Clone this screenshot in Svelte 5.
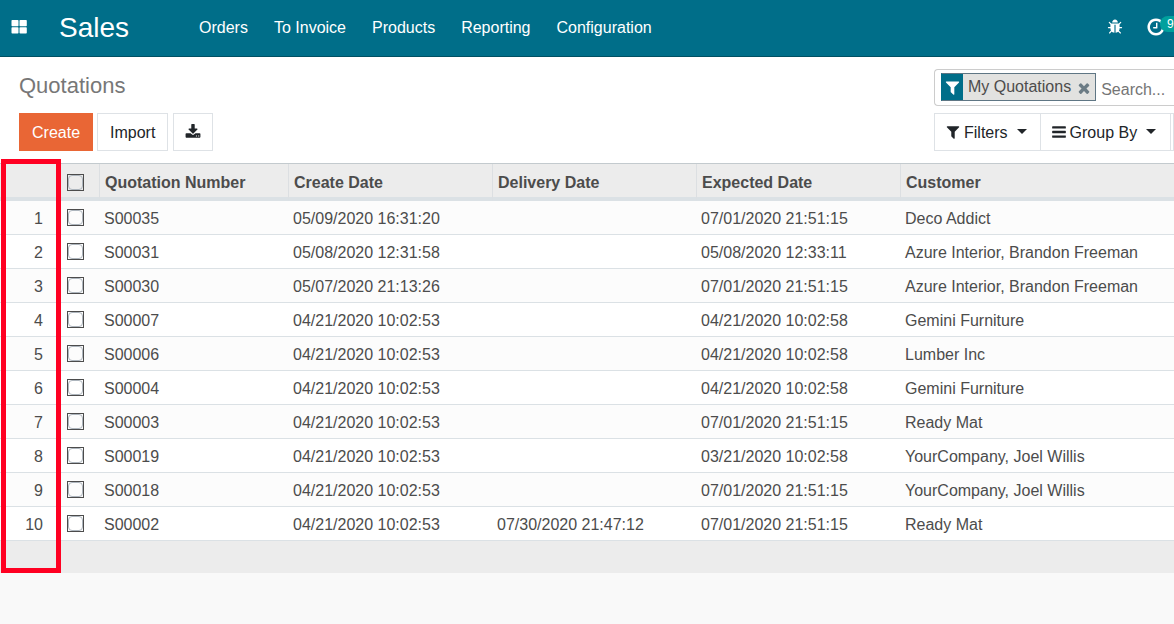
<script>
  const menu = ['Orders', 'To Invoice', 'Products', 'Reporting', 'Configuration'];
  const columns = ['Quotation Number', 'Create Date', 'Delivery Date', 'Expected Date', 'Customer'];
  const rows = [
    ['S00035', '05/09/2020 16:31:20', '', '07/01/2020 21:51:15', 'Deco Addict'],
    ['S00031', '05/08/2020 12:31:58', '', '05/08/2020 12:33:11', 'Azure Interior, Brandon Freeman'],
    ['S00030', '05/07/2020 21:13:26', '', '07/01/2020 21:51:15', 'Azure Interior, Brandon Freeman'],
    ['S00007', '04/21/2020 10:02:53', '', '04/21/2020 10:02:58', 'Gemini Furniture'],
    ['S00006', '04/21/2020 10:02:53', '', '04/21/2020 10:02:58', 'Lumber Inc'],
    ['S00004', '04/21/2020 10:02:53', '', '04/21/2020 10:02:58', 'Gemini Furniture'],
    ['S00003', '04/21/2020 10:02:53', '', '07/01/2020 21:51:15', 'Ready Mat'],
    ['S00019', '04/21/2020 10:02:53', '', '03/21/2020 10:02:58', 'YourCompany, Joel Willis'],
    ['S00018', '04/21/2020 10:02:53', '', '07/01/2020 21:51:15', 'YourCompany, Joel Willis'],
    ['S00002', '04/21/2020 10:02:53', '07/30/2020 21:47:12', '07/01/2020 21:51:15', 'Ready Mat']
  ];
  const icons = {
    filter: 'M1595 295q17 41-14 70l-493 493v742q0 42-39 59-13 5-25 5-27 0-45-19l-256-256q-19-19-19-45v-486l-493-493q-31-29-14-70 17-39 59-39h1280q42 0 59 39z',
    download: 'M1344 1344q0-26-19-45t-45-19-45 19-19 45 19 45 45 19 45-19 19-45zm256 0q0-26-19-45t-45-19-45 19-19 45 19 45 45 19 45-19 19-45zm128-224v320q0 40-28 68t-68 28h-1472q-40 0-68-28t-28-68v-320q0-40 28-68t68-28h465l135 136q58 56 136 56t136-56l136-136h464q40 0 68 28t28 68zm-325-569q17 41-14 70l-448 448q-18 19-45 19t-45-19l-448-448q-31-29-14-70 17-39 59-39h256v-448q0-26 19-45t45-19h256q26 0 45 19t19 45v448h256q42 0 59 39z',
    times: 'M1490 1322q0 40-28 68l-136 136q-28 28-68 28t-68-28l-294-294-294 294q-28 28-68 28t-68-28l-136-136q-28-28-28-68t28-68l294-294-294-294q-28-28-28-68t28-68l136-136q28-28 68-28t68 28l294 294 294-294q28-28 68-28t68 28l136 136q28 28 28 68t-28 68l-294 294 294 294q28 28 28 68z',
    clock: 'M1024 544v448q0 14-9 23t-23 9h-320q-14 0-23-9t-9-23v-64q0-14 9-23t23-9h224v-352q0-14 9-23t23-9h64q14 0 23 9t9 23zm416 352q0-148-73-273t-198-198-273-73-273 73-198 198-73 273 73 273 198 198 273 73 273-73 198-198 73-273zm224 0q0 209-103 385.5t-279.5 279.5-385.5 103-385.5-103-279.5-279.5-103-385.5 103-385.5 279.5-279.5 385.5-103 385.5 103 279.5 279.5 103 385.5z',
    bug: 'M1696 960q0 26-19 45t-45 19h-224q0 171-67 290l208 209q19 19 19 45t-19 45q-18 19-45 19t-45-19l-198-197q-5 5-15 13t-42 28.5-65 36.5-82 29-97 13v-896h-128v896q-51 0-101.5-13.5t-87-33-66-39-43.5-32.5l-15-14-183 207q-20 21-48 21-24 0-43-16-19-18-20.5-44.5t15.5-46.5l202-227q-58-114-58-274h-224q-26 0-45-19t-19-45 19-45 45-19h224v-294l-173-173q-19-19-19-45t19-45 45-19 45 19l173 173h844l173-173q19-19 45-19t45 19 19 45-19 45l-173 173v294h224q26 0 45 19t19 45zm-480-576h-640q0-133 93.5-226.500t226.500-93.500 226.500 93.500 93.500 226.500z',
    bars: 'M1664 1344v128q0 26-19 45t-45 19h-1408q-26 0-45-19t-19-45v-128q0-26 19-45t45-19h1408q26 0 45 19t19 45zm0-512v128q0 26-19 45t-45 19h-1408q-26 0-45-19t-19-45v-128q0-26 19-45t45-19h1408q26 0 45 19t19 45zm0-512v128q0 26-19 45t-45 19h-1408q-26 0-45-19t-19-45v-128q0-26 19-45t45-19h1408q26 0 45 19t19 45z'
  };
</script>

{#snippet icon(name, size)}
  <svg width={size} height={size} viewBox="0 0 1792 1792" fill="currentColor" aria-hidden="true"><path d={icons[name]} /></svg>
{/snippet}

<header class="navbar">
  <button class="apps" aria-label="Applications">
    <svg width="16" height="14" viewBox="0 0 16 14" fill="currentColor" aria-hidden="true">
      <rect x="0.500" y="0" width="7" height="6.300" rx="0.800" />
      <rect x="8.500" y="0" width="7.300" height="6.300" rx="0.800" />
      <rect x="0.500" y="7.300" width="7" height="6.300" rx="0.800" />
      <rect x="8.500" y="7.300" width="7.300" height="6.300" rx="0.800" />
    </svg>
  </button>
  <a class="brand" href="#sales">Sales</a>
  <nav>
    {#each menu as item}<a href="#menu">{item}</a>{/each}
  </nav>
  <div class="systray">
    <button aria-label="Debug">{@render icon('bug', 16)}</button>
    <button class="activities" aria-label="Activities">{@render icon('clock', 20)}<span class="badge">9</span></button>
  </div>
</header>

<section class="panel">
  <div class="left">
    <h1>Quotations</h1>
    <div class="actions">
      <button class="btn primary">Create</button>
      <button class="btn">Import</button>
      <button class="btn export" aria-label="Export">{@render icon('download', 16)}</button>
    </div>
  </div>
  <div class="right">
    <div class="search">
      <div class="facet">
        <span class="facet-icon">{@render icon('filter', 17)}</span>
        <span class="facet-name">My Quotations</span>
        <button class="remove" aria-label="Remove filter">{@render icon('times', 16)}</button>
      </div>
      <input type="text" placeholder="Search..." aria-label="Search" />
    </div>
    <div class="options">
      <button class="btn filters">{@render icon('filter', 16)}<span>Filters</span><i class="caret"></i></button>
      <button class="btn group">{@render icon('bars', 16)}<span>Group By</span><i class="caret"></i></button>
      <span class="next"></span>
    </div>
  </div>
</section>

<main class="list">
  <table>
    <colgroup>
      <col class="c-num" /><col class="c-check" /><col class="c-name" /><col class="c-date" /><col class="c-date" /><col class="c-date" /><col />
    </colgroup>
    <thead>
      <tr>
        <th></th>
        <th class="check"><input type="checkbox" aria-label="Select all" /></th>
        {#each columns as column}<th class="field" scope="col">{column}</th>{/each}
      </tr>
    </thead>
    <tbody>
      {#each rows as row, i}
        <tr>
          <td class="num">{i + 1}</td>
          <td class="check"><input type="checkbox" aria-label={`Select ${row[0]}`} /></td>
          {#each row as cell}<td class="field">{cell}</td>{/each}
        </tr>
      {/each}
    </tbody>
    <tfoot>
      <tr><td colspan="7"></td></tr>
    </tfoot>
  </table>
  <div class="highlight"></div>
</main>

<style>
  :global(body) {
    background: #f9f9f9;
    color: #4c4c4c;
    font: 16px/24px 'Liberation Sans', Arial, sans-serif;
    overflow-x: hidden;
  }
  button, input { font: inherit; color: inherit; }
  button { padding: 0; border: 0; background: none; cursor: pointer; }
  svg { display: block; flex: none; }

  .navbar {
    box-sizing: border-box;
    height: 57px;
    display: flex;
    align-items: center;
    padding-left: 11px;
    background: #006e89;
    border-bottom: 1px solid #005063;
    color: #fff;
    overflow: hidden;
  }
  .navbar a { color: #fff; text-decoration: none; }
  .apps { padding-bottom: 2px; }
  .brand { margin-left: 32px; font-size: 28px; line-height: 56px; }
  nav { display: flex; gap: 26px; margin-left: 70px; line-height: 56px; flex: 1; }
  .systray { display: flex; align-items: center; gap: 23px; padding: 0 8px 2px 0; }
  .activities { position: relative; }
  .badge {
    position: absolute;
    left: 14px;
    top: -1px;
    padding: 0 7px;
    border-radius: 8px;
    background: #00a09d;
    font-size: 12px;
    line-height: 16px;
  }

  .panel {
    display: flex;
    justify-content: space-between;
    padding: 12px 0 12px 19px;
    background: #fff;
    border-bottom: 1px solid #c3cace;
  }
  h1 { margin: 0 0 11px; font-size: 22px; font-weight: 400; line-height: 33px; color: #777; }
  .actions, .options { display: flex; }
  .actions { gap: 4px; }
  .btn {
    box-sizing: border-box;
    height: 38px;
    padding: 1px 12px 0;
    border: 1px solid #dee2e6;
    background: #fff;
    color: #212529;
    display: flex;
    align-items: center;
    white-space: nowrap;
  }
  .primary { background: #e96635; border-color: #e96635; color: #fff; }
  .export { margin-left: 1px; padding: 0 11px 1px; }
  .right { width: 240px; overflow: hidden; }
  .search {
    box-sizing: border-box;
    height: 37px;
    display: flex;
    align-items: center;
    margin-bottom: 7px;
    padding-left: 6px;
    border: 1px solid #ccc;
    border-right: 0;
    border-radius: 4px 0 0 4px;
  }
  .facet {
    box-sizing: border-box;
    height: 28px;
    display: flex;
    align-items: stretch;
    flex: none;
    margin-bottom: 1px;
    border: 1px solid #5f7684;
    border-left-color: #006e89;
    background: #e2e2e0;
  }
  .facet-icon { display: flex; align-items: center; padding: 0 2px; background: #006e89; color: #fff; }
  .facet-name { padding-left: 5px; line-height: 26px; }
  .remove { display: flex; align-items: center; padding: 2px 3px 0 5px; color: #6c7c85; }
  .search input { width: 70px; min-width: 0; padding: 0 0 0 5px; border: 0; outline: 0; background: none; line-height: 24px; margin-top: 4px; }
  .search input::placeholder { color: #757575; opacity: 1; }
  .options .btn { padding: 0 13px 0 10px; gap: 3px; }
  .options .btn span { padding-top: 1px; }
  .options .group { margin-left: -1px; padding-right: 14px; }
  .caret { margin: 0 0 2px 6px; border: 5px solid transparent; border-top-color: currentColor; border-bottom: 0; }
  .next { border: 1px solid #dee2e6; border-left: 0; flex: 1; }

  .list { position: relative; }
  table { width: 100%; table-layout: fixed; border-collapse: separate; border-spacing: 0; background: #fff; }
  .c-num { width: 61px; }
  .c-check { width: 38px; }
  .c-name { width: 189px; }
  .c-date { width: 204px; }
  th, td { box-sizing: border-box; padding: 0; text-align: left; white-space: nowrap; }
  th { height: 37px; background: #ececec; border-bottom: 4px solid #dbe1e5; }
  th.field { padding: 4px 0 0 5px; border-left: 1px solid #dcdfe2; }
  td { height: 34px; border-bottom: 1px solid #dbe1e5; }
  tbody tr:nth-child(odd) { background: #fcfcfc; }
  td.field { padding: 2px 0 0 5px; }
  .num { padding: 2px 18px 0 0; text-align: right; }
  .check { padding-left: 6px; }
  th.check { padding-top: 3px; }
  tfoot td { height: 32px; border: 0; background: #ececec; }
  input[type='checkbox'] {
    appearance: none;
    box-sizing: border-box;
    display: block;
    width: 17px;
    height: 17px;
    margin: 0;
    border: 1px solid #4c4c4c;
  }
  input[type='checkbox']::before {
    content: '';
    box-sizing: border-box;
    display: block;
    height: 15px;
    border: 1px solid #adb5bd;
    border-radius: 4px;
  }
  input[type='checkbox']:checked::before { background: #006e89; }
  .highlight {
    position: absolute;
    box-sizing: border-box;
    left: 1px;
    top: -5px;
    bottom: 0;
    width: 60px;
    border: 5px solid #ff0022;
    pointer-events: none;
  }
</style>
